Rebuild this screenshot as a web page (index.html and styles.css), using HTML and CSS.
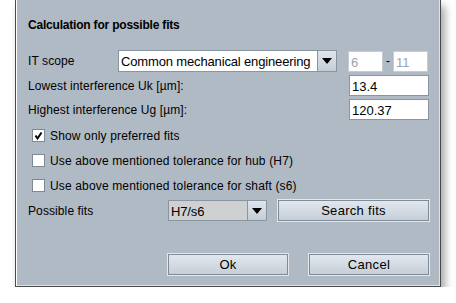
FILE: index.html
```html
<!DOCTYPE html>
<html lang="en">
  <head>
    <meta charset="UTF-8" />
    <title>Calculation for possible fits</title>
    <link rel="stylesheet" href="styles.css">
  </head>
  <body>
    <div class="dialog">
      <h1 class="title">Calculation for possible fits</h1>

      <!-- IT scope -->
      <div class="row row-scope">
        <span class="label scope-label">IT scope</span>
        <div class="combo scope-combo">
          <span class="combo-text">Common mechanical engineering</span>
          <span class="combo-arrow"><i></i></span>
        </div>
        <span class="field small disabled">6</span>
        <span class="dash">-</span>
        <span class="field small disabled">11</span>
      </div>

      <div class="row">
        <span class="label grow">Lowest interference Uk [µm]:</span>
        <span class="field wide">13.4</span>
      </div>

      <div class="row">
        <span class="label grow">Highest interference Ug [µm]:</span>
        <span class="field wide">120.37</span>
      </div>

      <!-- checkboxes -->
      <label class="check first">
        <span class="box checked">
          <svg width="11" height="11" viewBox="0 0 11 11"><path d="M2.5 5.5 L4.5 8.5 L8.5 2.5" fill="none" stroke="#000" stroke-width="2"/></svg>
        </span>
        Show only preferred fits
      </label>
      <label class="check">
        <span class="box"></span>
        Use above mentioned tolerance for hub (H7)
      </label>
      <label class="check">
        <span class="box"></span>
        Use above mentioned tolerance for shaft (s6)
      </label>

      <div class="row row-fits">
        <span class="label fits-label">Possible fits</span>
        <div class="combo fits-combo">
          <span class="combo-text">H7/s6</span>
          <span class="combo-arrow"><i></i></span>
        </div>
        <button class="btn search">Search fits</button>
      </div>

      <div class="actions">
        <button class="btn">Ok</button>
        <button class="btn">Cancel</button>
      </div>
    </div>
  </body>
</html>
```

FILE: styles.css
```css
body {
  margin: 0;
  background: #fff;
  font-family: "Liberation Sans", Arial, sans-serif;
  font-size: 12px;
  color: #000;
}

.dialog {
  box-sizing: border-box;
  margin-left: 15px;
  width: 426px;
  height: 287px;
  background: #b0bac4;
  border: 1px solid #4a4a4a;
  border-top: none;
  box-shadow: inset 1px 0 0 #fff, inset -1px -1px 0 #dfe3e8, 4px 6px 8px rgba(0, 0, 0, 0.35);
  padding: 0 11px 0 12px;
}

.title {
  margin: 0;
  padding-top: 18px;
  height: 50px;
  box-sizing: border-box;
  font-size: 12px;
  font-weight: bold;
  line-height: 14px;
  letter-spacing: -0.2px;
}

.row {
  display: flex;
  align-items: center;
  height: 21px;
  margin-top: 3px;
}

.row-scope {
  height: 22px;
  margin-top: 0;
}

.label {
  white-space: nowrap;
  letter-spacing: 0.1px;
}

.scope-label {
  width: 90px;
}

.grow {
  flex: 1;
}

.field {
  box-sizing: border-box;
  height: 21px;
  background: #fff;
  border: 1px solid #8995a1;
  padding: 3px 2px 0;
  font-size: 13px;
  line-height: 15px;
}

.field.small {
  width: 35px;
}

.field.wide {
  width: 80px;
}

.field.disabled {
  color: #9aa3ad;
  border-color: #c6ccd3;
}

.dash {
  width: 10px;
  text-align: center;
}

.combo {
  box-sizing: border-box;
  display: flex;
  height: 22px;
  background: #fff;
  border: 1px solid #8995a1;
}

.scope-combo {
  width: 219px;
  margin-right: 11px;
}

.combo-text {
  flex: 1;
  padding: 3px 0 0 2px;
  font-size: 13px;
  line-height: 15px;
  letter-spacing: -0.15px;
  white-space: nowrap;
}

.combo-arrow {
  width: 18px;
  display: flex;
  align-items: center;
  justify-content: center;
  border-left: 1px solid #8995a1;
  background: linear-gradient(#dfe5ec, #c3ccd6);
}

.combo-arrow i {
  width: 0;
  height: 0;
  border-left: 5px solid transparent;
  border-right: 5px solid transparent;
  border-top: 6px solid #000;
}

.check {
  display: flex;
  align-items: center;
  height: 13px;
  margin-top: 12px;
  padding-left: 4px;
  font-size: 12px;
  letter-spacing: 0.15px;
  white-space: nowrap;
}

.check.first {
  margin-top: 9px;
}

.box {
  box-sizing: border-box;
  width: 13px;
  height: 13px;
  margin-right: 5px;
  background: #fff;
  border: 1px solid #7d8994;
  display: flex;
  align-items: center;
  justify-content: center;
}

.row-fits {
  margin-top: 8px;
}

.fits-label {
  width: 140px;
}

.fits-combo {
  width: 99px;
  height: 21px;
  margin-right: 11px;
  background: #cfd0d2;
}

.btn {
  box-sizing: border-box;
  height: 21px;
  border: 1px solid #7f8b97;
  box-shadow: 0 0 0 1px #e4e8ec;
  background: linear-gradient(#e1e7ee, #c5ced8);
  font-family: "Liberation Sans", Arial, sans-serif;
  font-size: 13px;
  letter-spacing: 0.3px;
  color: #000;
  padding: 0;
}

.search {
  flex: 1;
}

.actions {
  display: flex;
  gap: 21px;
  margin-top: 33px;
  padding-left: 140px;
}

.actions .btn {
  width: 120px;
}
```
